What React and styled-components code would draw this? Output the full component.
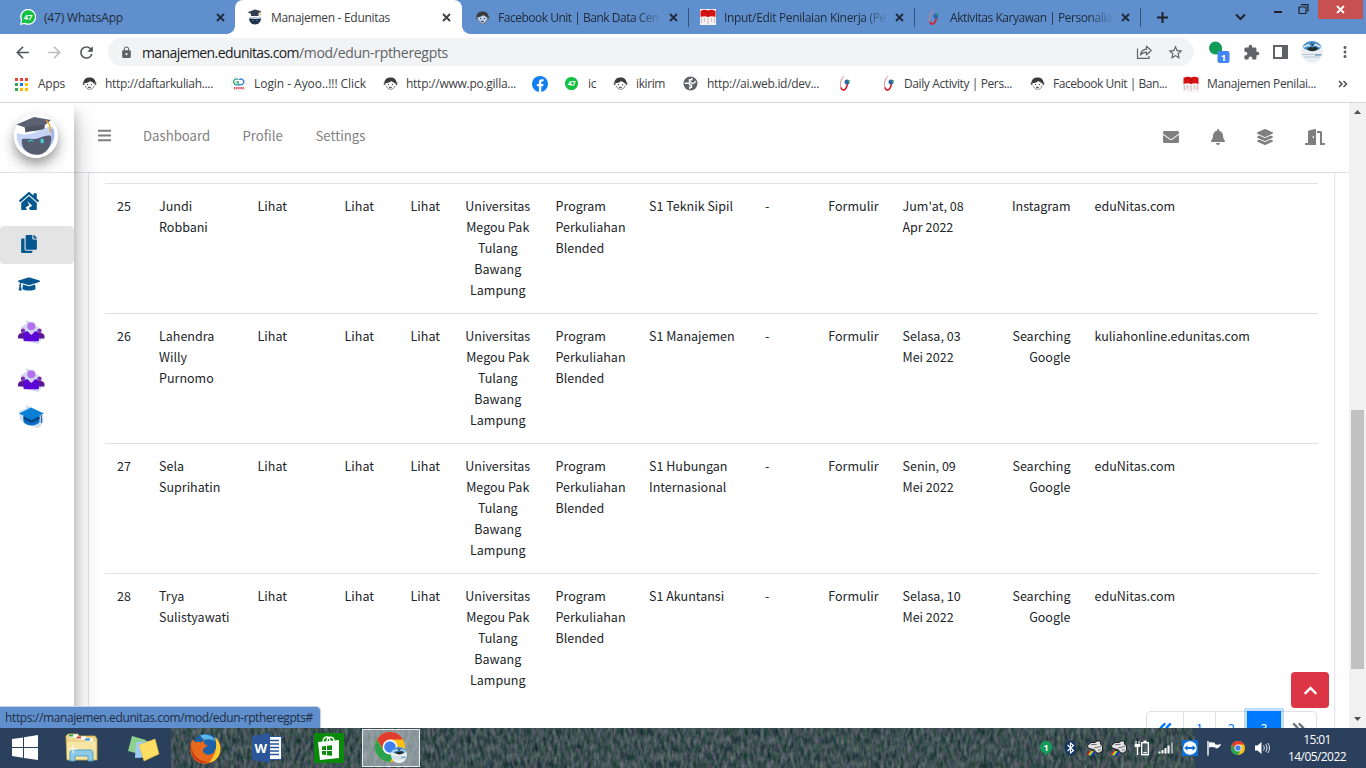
import React from "react";
import styled, { createGlobalStyle, css } from "styled-components";
import {
  FaEnvelope, FaBell, FaLayerGroup, FaDoorOpen, FaBars, FaHouseDamage, FaCopy,
  FaGraduationCap, FaAngleDoubleLeft, FaAngleDoubleRight, FaChevronUp,
} from "react-icons/fa";
import {
  MdArrowBack, MdArrowForward, MdRefresh, MdLock, MdStarBorder, MdExtension, MdMoreVert,
} from "react-icons/md";

const chromeBlue = "#608fcd";

const GlobalStyle = createGlobalStyle`
  * { box-sizing: border-box; }
  body { margin: 0; background: #fff; overflow: hidden; }
  svg { display: block; flex: none; }
`;

const Screen = styled.div`
  width: 1366px;
  height: 768px;
  display: flex;
  flex-direction: column;
  overflow: hidden;
  font-family: "Open Sans", "Noto Sans", sans-serif;
  font-size: 12px;
  color: #3c4043;
`;

/* ---------- browser chrome ---------- */

const TabStrip = styled.div`
  height: 34px;
  flex: none;
  display: flex;
  background: ${chromeBlue};
  color: #1f2a3a;
`;

const Tab = styled.div`
  width: ${(p) => p.$w}px;
  height: 34px;
  padding: 0 ${(p) => p.$right || 11}px 0 ${(p) => p.$pad}px;
  display: flex;
  align-items: center;
  position: relative;
  ${(p) => p.$divider && css`
    &::after {
      content: "";
      position: absolute;
      right: 0;
      top: 8px;
      width: 1px;
      height: 19px;
      background: #34527c;
    }
  `}
  ${(p) => p.$active && css`
    background: #fff;
    color: #3c4043;
    border-radius: 8px 8px 0 0;
    &::before, &::after {
      content: "";
      position: absolute;
      bottom: 0;
      width: 8px;
      height: 8px;
    }
    &::before { left: -8px; background: radial-gradient(circle at 0 0, ${chromeBlue} 7.5px, #fff 8px); }
    &::after { right: -8px; background: radial-gradient(circle at 100% 0, ${chromeBlue} 7.5px, #fff 8px); }
  `}
`;

const TabTitle = styled.span`
  flex: 1;
  min-width: 0;
  margin-left: ${(p) => p.$gap}px;
  white-space: nowrap;
  overflow: hidden;
  letter-spacing: ${(p) => p.$ls}px;
  ${(p) => p.$fade && css`
    margin-right: 8px;
    mask-image: linear-gradient(90deg, #000 85%, transparent 101%);
  `}
`;

const WindowControls = styled.div`
  flex: 1;
  display: flex;
  align-items: flex-start;
`;

const CloseWindow = styled.div`
  width: 45px;
  height: 19px;
  margin-left: 9px;
  background: #c75050;
  display: flex;
  align-items: center;
  justify-content: center;
`;

const Toolbar = styled.div`
  height: 35px;
  flex: none;
  display: flex;
  align-items: center;
  padding: 1px 12px 0 13px;
  color: #5f6368;
  background: #fff;
`;

const NavButton = styled.div`
  width: 32px;
  color: ${(p) => (p.$dim ? "#bbbdbf" : "#4f5357")};
`;

const UrlPill = styled.div`
  width: 1086px;
  height: 28px;
  margin-right: 14px;
  margin-left: -1px;
  padding: 0 10px 0 12px;
  border-radius: 14px;
  background: #f1f3f4;
  display: flex;
  align-items: center;
  gap: 14px;
`;

const UrlText = styled.div`
  flex: 1;
  margin-left: -5px;
  font-size: 14px;
  letter-spacing: -0.31px;
  white-space: nowrap;
  b { font-weight: 400; color: #202124; letter-spacing: -0.588px; }
`;

const Actions = styled.div`
  flex: 1;
  display: flex;
  align-items: center;
  justify-content: space-between;
`;

const BookmarksBar = styled.div`
  height: 34px;
  flex: none;
  display: flex;
  align-items: center;
  padding: 0 0 4px 14px;
  border-bottom: 1px solid #d4d7da;
  background: #fff;
  color: #3c4043;
`;

const Bookmark = styled.div`
  width: ${(p) => p.$w}px;
  flex: none;
  display: flex;
  align-items: center;
  white-space: nowrap;
  letter-spacing: ${(p) => p.$ls || 0}px;
`;

const BookmarkIcon = styled.div`
  width: ${(p) => p.$w}px;
  flex: none;
`;

/* ---------- page ---------- */

const Page = styled.div`
  height: 625px;
  flex: none;
  display: flex;
  position: relative;
  overflow: hidden;
  background: #fff;
  font-family: "Noto Sans CJK SC", sans-serif;
  font-size: 12.53px;
  line-height: 21px;
  color: #212529;
`;

const Sidebar = styled.aside`
  width: 74px;
  flex: none;
  background: #fff;
  z-index: 2;
  box-shadow: 0 14px 28px rgba(0, 0, 0, 0.25), 0 10px 10px rgba(0, 0, 0, 0.22);
  display: flex;
  flex-direction: column;
`;

const Brand = styled.div`
  height: 70px;
  border-bottom: 1px solid #dee2e6;
  padding: 11px 0 0 14px;
  overflow: hidden;
`;

const BrandLogo = styled.div`
  width: 44px;
  height: 44px;
  border-radius: 50%;
  background: #fff;
  box-shadow: 0 8px 16px rgba(0, 0, 0, 0.25), 0 5px 8px rgba(0, 0, 0, 0.2);
`;

const SideLinks = styled.nav`
  padding-top: 10px;
  color: #04588f;
`;

const SideLink = styled.div`
  height: ${(p) => p.$h || 38}px;
  margin-bottom: ${(p) => p.$mb || 0}px;
  padding: 0 0 ${(p) => p.$pb || 2}px ${(p) => p.$pl || 18}px;
  border-radius: 4px;
  display: flex;
  align-items: center;
  background: ${(p) => (p.$active ? "#e4e4e4" : "transparent")};
`;

const Main = styled.main`
  width: 1275px;
  flex: none;
  display: flex;
  flex-direction: column;
`;

const Header = styled.header`
  height: 70px;
  flex: none;
  display: flex;
  align-items: center;
  padding: 0 24px 6px 22.5px;
  border-bottom: 1px solid #dee2e6;
  color: #7f7f7f;
`;

const HeaderLink = styled.span`
  width: ${(p) => p.$w}px;
  font-size: 13.2px;
  padding-top: 1px;
`;

const HeaderIcons = styled.div`
  margin-left: auto;
  display: flex;
  align-items: center;
  padding-top: 5px;
`;

const HeaderIcon = styled.div`
  margin-left: ${(p) => p.$ml}px;
`;

const Card = styled.section`
  flex: 1;
  margin: 0 14px;
  padding: 10px 16px 0;
  border: solid #e3e5e8;
  border-width: 0 1px;
  box-shadow: 0 0 1px rgba(0, 0, 0, 0.12);
`;

const Row = styled.div`
  height: 130px;
  border-top: 1px solid #dee2e6;
  padding-top: 11px;
  display: grid;
  grid-template-columns: 42px 94px 58px 87px 66px 91.5px 93.5px 116px 60px 77.5px 104px 88px 1fr;
`;

const Cell = styled.div`
  padding: 0 12px;
  white-space: pre;
  text-align: ${(p) => p.$align || "left"};
`;

const Pagination = styled.div`
  display: flex;
  justify-content: flex-end;
  margin-top: 8px;
  margin-right: 1px;
`;

const PageItem = styled.div`
  width: ${(p) => p.$w}px;
  height: 35px;
  padding-bottom: 2px;
  margin-left: -1px;
  border: 1px solid #dee2e6;
  color: ${(p) => (p.$muted ? "#6c757d" : "#007bff")};
  display: flex;
  align-items: center;
  justify-content: center;
  &:first-child { border-radius: 4px 0 0 4px; }
  &:last-child { border-radius: 0 4px 4px 0; }
  ${(p) => p.$active && css`
    background: #007bff;
    border-color: #007bff;
    color: #fff;
    z-index: 1;
    box-shadow: 0 0 0 3px rgba(0, 123, 255, 0.25);
  `}
`;

const ScrollTop = styled.div`
  position: absolute;
  right: 37px;
  top: 569px;
  width: 38px;
  height: 36px;
  border-radius: 4px;
  background: #dc3545;
  color: #fff;
  display: flex;
  align-items: center;
  justify-content: center;
`;

const LinkStatus = styled.div`
  position: absolute;
  left: 0;
  bottom: 0;
  width: 321px;
  height: 22px;
  z-index: 3;
  padding-left: 5px;
  background: ${chromeBlue};
  border: solid #c9d2de;
  border-width: 1px 1px 0 0;
  border-radius: 0 5px 0 0;
  font: 12px/21px "Open Sans", sans-serif;
  letter-spacing: -0.377px;
  white-space: nowrap;
  color: #1f2d42;
`;

const Scrollbar = styled.div`
  width: 17px;
  flex: none;
  background: #f1f1f1;
  display: flex;
  flex-direction: column;
  align-items: center;
  padding: 7px 0 0;
`;

const Thumb = styled.div`
  width: 13px;
  height: 259px;
  margin: 296px 0 48px;
  background: #c1c1c1;
`;

/* ---------- taskbar ---------- */

const Taskbar = styled.footer`
  height: 40px;
  flex: none;
  position: relative;
  display: flex;
  align-items: center;
  background: #2b405d;
  color: #fff;
`;

const Grass = styled.svg`
  position: absolute;
  left: 171px;
  top: 0;
`;

const TaskButton = styled.div`
  width: ${(p) => p.$w}px;
  height: 40px;
  display: flex;
  align-items: center;
  justify-content: center;
  position: relative;
`;

const ActiveTask = styled(TaskButton)`
  height: 38px;
  margin-left: 2px;
  background: rgba(190, 200, 205, 0.6);
  border: 1px solid #e6eaec;
`;

const Tray = styled.div`
  margin-left: auto;
  display: flex;
  position: relative;
`;

const TrayItem = styled.div`
  width: 24px;
  display: flex;
  align-items: center;
  justify-content: center;
`;

const Clock = styled.div`
  width: 92px;
  height: 40px;
  padding: 4px 6px 0 0;
  line-height: 16.5px;
  text-align: center;
  letter-spacing: -0.57px;
`;

/* ---------- icons ---------- */

const Cross = ({ size = 9, color = "#1f2a3a", sw = 1.9 }) => (
  <svg width={size} height={size} viewBox="0 0 9 9">
    <path d="M1 1l7 7M8 1l-7 7" stroke={color} strokeWidth={sw} fill="none" />
  </svg>
);

const WhatsApp = ({ size = 16, ring }) => (
  <svg width={size} height={size} viewBox="0 0 16 16">
    {ring && <path d="M0 16l1-4.5A8 8 0 1 1 4.5 15z" fill="#fff" />}
    <path d={ring ? "M1.4 14.6l.9-3.5A6.7 6.7 0 1 1 5 13.8z" : "M8 1a7 7 0 1 1-.01 0z"} fill="#12c044" />
    <text x="8" y="10.8" fontSize="7.6" fontWeight="700" fontFamily="Open Sans" fill="#fff" textAnchor="middle">47</text>
  </svg>
);

const Agent = ({ size = 15 }) => (
  <svg width={size} height={size} viewBox="0 0 15 15">
    <path d="M3 7.500C3.200 11 5 13.400 7.500 13.400S11.800 11 12 7.500L9 5 4 6z" fill="#fff" fillOpacity=".6" />
    <path d="M1.500 6.800C1.600 3.400 4 1.500 7.500 1.500s5.900 1.900 6 5.300l-1.400 1C11.500 6.600 9.500 6 8.200 5 6.700 6.600 4.700 7 3.200 7z" fill="#3b3b3d" />
    <path d="M1 6.300h1.500v2.900L.6 8.500zM12.500 6.300h1.800v2.200l-1.500 1z" fill="#555" />
    <path d="M3.300 10c.8 1.900 2.200 3.300 4.200 3.300 2.800 0 4-1.500 4.600-3.500" stroke="#777" strokeWidth=".9" fill="none" />
    <circle cx="5.500" cy="8.600" r=".7" fill="#333" /><circle cx="9.500" cy="8.600" r=".7" fill="#333" />
    <path d="M6 11.300h2.800" stroke="#333" strokeWidth="1" />
  </svg>
);

const Bot = ({ size = 44 }) => (
  <svg width={size} height={size} viewBox="0 0 44 44">
    <circle cx="22" cy="22" r="22" fill="#fff" />
    <path d="M3 19c5 2 12 2 19-1s13-6 17-5c3 8 1 17-6 23-6 5-16 5-23 0C4 31 2 25 3 19z" fill="#c6d4f7" />
    <path d="M36 15c2.500 7 1.500 14-4 20 7-4 10-12 7.500-20z" fill="#a3b8ec" />
    <path d="M8 25c6-1 12 1 17-1s9-3 12-2c1 8-3 17-11 18.500C16 42 6 36 8 25z" fill="#575d71" />
    <path d="M14.500 28c1-2.500 3.500-2.500 4.500-.500" stroke="#37c6d0" strokeWidth="1.300" fill="none" />
    <rect x="26.500" y="24.500" width="3.200" height="4.800" rx="1.500" fill="#41d3dc" />
    <path d="M10.500 12l1 6.500c5-2 13-1 19-4L31 8z" fill="#4d5363" />
    <path d="M2.500 10.500L20 3l17 3-6 5c-8-.5-13 1.500-20 2.500z" fill="#5c6274" />
    <path d="M32 6.500c3 2 5 5 4 12" stroke="#f5a623" strokeWidth="1.400" fill="none" />
  </svg>
);

const BotFavicon = () => (
  <svg width="16" height="16" viewBox="0 0 16 16">
    <path d="M2 8h12c.5 4-2 7.500-6 7.500S1.500 12 2 8z" fill="#1f2f45" />
    <path d="M2 7.500c3 1 8 .8 12 0v2c-4 .6-8 .6-12 0z" fill="#cfdcf3" />
    <path d="M.5 3.200L8 .5l6.500 1.800-3 2V7H4V4.800z" fill="#333c50" />
    <circle cx="6" cy="11.500" r=".6" fill="#49c3e0" /><circle cx="10" cy="11.300" r=".6" fill="#49c3e0" />
    <path d="M13.200 2.600v4" stroke="#d79c3a" strokeWidth=".9" />
  </svg>
);

const FlagBook = () => (
  <svg width="16" height="16" viewBox="0 0 16 16">
    <rect width="16" height="16" fill="#f7f3f3" />
    <path d="M.5 2C3 .3 6 .3 8 1.500c2-1.200 5-1.200 7.500.5v6c-2.500-1-5.500-1-7.500 0C6 7 3 7 .5 8z" fill="#d81212" />
    <path d="M8 2v6M3 3c1.500-.6 3-.5 4 0" stroke="#a50d0d" strokeWidth=".7" fill="none" />
    <path d="M1.500 9v5M4.500 9v4M8 9v6M11.500 9v4M14.500 9v5" stroke="#d6c4c4" strokeWidth="1.300" fill="none" />
  </svg>
);

const Swoosh = () => (
  <svg width="14" height="17" viewBox="0 0 14 17">
    <path d="M5 1.200C1.800 4 .6 9 2 13c.2.700.6 1.200 1 1.500" stroke="#d8848a" strokeWidth="1" fill="none" />
    <path d="M2 12.500c.8 3.300 3.600 3.300 5 .7.800-1.400 1.200-2.700 1.400-4" stroke="#d6202b" strokeWidth="1.700" fill="none" />
    <circle cx="8" cy="7" r="2.500" fill="#2d64a8" /><path d="M8.500 4.800l2.500.8-1.700 2.400z" fill="#3a9d6a" />
  </svg>
);

const AppsGrid = () => (
  <svg width="14" height="14" viewBox="0 0 14 14">
    {["#ea4335", "#ea4335", "#ea4335", "#34a853", "#1a73e8", "#fbbc04", "#34a853", "#fbbc04", "#fbbc04"].map((c, i) => (
      <rect key={i} x={1 + (i % 3) * 5} y={1 + Math.floor(i / 3) * 5} width="3" height="3" fill={c} />
    ))}
  </svg>
);

const ClickLogo = () => (
  <svg width="16" height="16" viewBox="0 0 16 16">
    <circle cx="8" cy="8" r="7.500" fill="#fff" stroke="#e3e3e3" strokeWidth=".6" />
    <path d="M7.200 3.600a2.800 2.800 0 1 0 0 4.400V6H5.300" stroke="#2fae74" strokeWidth="1.300" fill="none" />
    <path d="M8 3.900a2.800 2.800 0 1 1 .8 4.500L7 9.800" stroke="#3f86d8" strokeWidth="1.300" fill="none" />
    <path d="M3 12.200h10" stroke="#e0506a" strokeWidth="2.200" strokeDasharray="1.500 .6" />
  </svg>
);

const Facebook = () => (
  <svg width="16" height="16" viewBox="0 0 16 16">
    <circle cx="8" cy="8" r="8" fill="#1280f0" />
    <path d="M6.900 16v-5.700H4.900V8h2V6.300c0-2 1.200-3.100 3-3.100.9 0 1.700.1 1.700.1v2h-1c-1 0-1.300.6-1.300 1.200V8h2.200l-.4 2.300H9.300V16z" fill="#fff" />
  </svg>
);

const Globe = () => (
  <svg width="15" height="15" viewBox="0 0 15 15">
    <circle cx="7.500" cy="7.500" r="7" fill="#5f6368" />
    <path d="M1.800 7.300h3.400c1.200 0 1.800.7 1.800 1.800h1.500v2.200H6.800v1.900M12.800 5.200c-1 1.500-1.800 2.300-3.300 2.300-1.500 0-1.400-1.800-3-1.800V3.800h2.300V2" stroke="#fff" strokeWidth="1.400" fill="none" />
  </svg>
);

const Share = () => (
  <svg width="17" height="16" viewBox="0 0 17 16">
    <path d="M1.500 4.500v9.800h11.500V12" stroke="#5f6368" strokeWidth="1.200" fill="none" />
    <path d="M4.500 11c.5-4 2.500-5.500 6-5.800V2.200l4.700 4.300-4.700 4.300V8.200c-2.500 0-4.500.8-6 2.800z" stroke="#5f6368" strokeWidth="1.200" fill="none" strokeLinejoin="round" />
  </svg>
);

const NoteExtension = () => (
  <svg width="22" height="24" viewBox="0 0 22 24">
    <path d="M7.500 1.500a6.500 6.500 0 0 1 6.500 6.500v7l-4-1A6.500 6.500 0 1 1 7.500 1.500z" fill="#129c57" />
    <rect x="9.500" y="11" width="12" height="12" rx="2" fill="#4285f4" />
    <text x="15.500" y="20.600" fontSize="9.500" fontWeight="700" fontFamily="Open Sans" fill="#fff" textAnchor="middle">1</text>
  </svg>
);

const Avatar = ({ size = 22 }) => (
  <svg width={size} height={size} viewBox="0 0 22 22">
    <circle cx="11" cy="11" r="11" fill="#e9eff2" />
    <path d="M1.500 5.500A11 11 0 0 1 20.500 5.500L18 8.500H4z" fill="#4a8fcb" />
    <path d="M2.500 6l5-2 1.500 1.500M19.500 6l-5-2.500L13 5" stroke="#dcecf8" strokeWidth="1.500" fill="none" />
    <path d="M10.500 1.500l1 3.500 1.500-3" stroke="#1f4f78" fill="none" />
    <path d="M5.500 8l4-2.200 2 .8 3-1 3 2.400c-2 1.800-4 2.200-6 2.200S7 9.800 5.500 8z" fill="#20312c" />
    <path d="M1 13.500h20M3 16h16" stroke="#b4c9d5" strokeWidth="1.100" />
    <path d="M14 14h6" stroke="#3f7fb0" />
  </svg>
);

const Crowd = () => (
  <svg width="28" height="25" viewBox="0 0 28 25">
    <path d="M3 8l5-3 1-4 5 3 6 4 4 6v6l-4 5-8-2-9-3z" fill="#d3d8f2" />
    <circle cx="5" cy="11.800" r="2.200" fill="#7a2cb0" /><circle cx="21.500" cy="11.800" r="2.200" fill="#7a2cb0" />
    <path d="M0 19.500V17.500c0-2.500 2-3.500 5-3.500s4 1 4 3.500v2zM18 19.500v-2c0-2.500 1-3.500 4-3.500s4.500 1 4.500 3.500v2z" fill="#5b1796" />
    <circle cx="13.300" cy="7.300" r="4" fill="#b471ee" />
    <path d="M5.500 20.500c0 1 .5 1.700 1.500 1.700h12.500c1 0 1.500-.7 1.500-1.700V16c0-2.500-1.500-3.700-4-3.700l-3.700 3.700-3.700-3.700c-2.500 0-4.100 1.200-4.100 3.700z" fill="#5b06d6" />
    <path d="M11 12.300h4.800l-1 3-.9-1.500h-1l-.9 1.500z" fill="#dcc8fa" />
  </svg>
);

const BlueCap = () => (
  <svg width="28" height="25" viewBox="0 0 28 25">
    <path d="M1 7l6-2 2-4 5 3 7 5 5 7-4 7-3 1-8-3-9-5z" fill="#cfe0f5" />
    <path d="M5.500 12v6c3 4.500 13 4.500 16 0v-6z" fill="#0a6fc4" />
    <path d="M5.500 12.500v2.500l8 4 8-4v-2.500l-8 4z" fill="#07427f" />
    <path d="M1 9.500L13 3.500 26 9.500 13.500 15.500z" fill="#0a7fd6" />
    <path d="M23.500 11v8" stroke="#2568a8" strokeWidth="1.300" />
  </svg>
);

const ChromeLogo = ({ size }) => (
  <svg width={size} height={size} viewBox="0 0 30 30">
    <circle cx="15" cy="15" r="15" fill="#fbc116" />
    <path d="M2 7.500A15 15 0 0 1 28 7.500H15L9 18.500z" fill="#e33b2e" />
    <path d="M2 7.500A15 15 0 0 0 15 30l6.500-11.200L15 22 8.600 18.800z" fill="#2ba24c" />
    <circle cx="15" cy="15" r="7.400" fill="#fff" />
    <circle cx="15" cy="15" r="5.800" fill="#3f80ee" />
  </svg>
);

const WindowsLogo = () => (
  <svg width="26" height="26" viewBox="0 0 26 26">
    <path d="M0 4l11-1.600V12H0zM12 2.200L26 0v12H12zM0 13h11v9.700L0 21.100zM12 13h14v12l-14-2z" fill="#fff" />
  </svg>
);

const Explorer = () => (
  <svg width="33" height="30" viewBox="0 0 33 30">
    <path d="M1 3l2-2h10l1 2h16l2 3v21H2z" fill="#ecd588" stroke="#d0b052" strokeWidth=".8" />
    <path d="M4 3h9M12 5h9M20 7h8" stroke="#fff" strokeWidth="3" />
    <path d="M4 2.500h4" stroke="#22a04a" strokeWidth="2" /><path d="M12 4.500h4" stroke="#d33d2e" strokeWidth="2" /><path d="M20 6.500h5" stroke="#2f8fdc" strokeWidth="2" />
    <path d="M2 9h29v17H2z" fill="#f5e6a6" />
    <path d="M5 28v-8c0-2 1-3 3-3h17c2 0 3 1 3 3v8h-5v-5H10v5z" fill="#8fcbe6" stroke="#4a9dc4" strokeWidth=".9" />
    <path d="M8 12v8M4 16h8" stroke="#fff" strokeWidth="1" />
  </svg>
);

const StickyNotes = () => (
  <svg width="33" height="27" viewBox="0 0 33 27">
    <path d="M5 1l14 4-3 15-15-4z" fill="#8dd08a" />
    <path d="M9 7l13-1 3 16-17 1z" fill="#9cccf5" />
    <path d="M12 10l16-6 4 15-15 7z" fill="#ffdf63" stroke="#e6bd3b" strokeWidth=".6" />
  </svg>
);

const Firefox = () => (
  <svg width="31" height="31" viewBox="0 0 31 31">
    <circle cx="16" cy="15" r="14" fill="#1d62a8" />
    <path d="M10 2.500c6-2.500 13 0 16 6-4-2.500-8-3-12-1.500z" fill="#59b7e8" />
    <path d="M25 4c6 5 7 14 3 20-5 7-15 9-22 4C-1 22-1 12 3 6l2 3.500c2-1 4-1 6 0l3-2.500c-.5 2 0 3.500 1 4.500l3 .7-3 2.300c-2 1-3 3.500-1 5.500 3 3 8 2 10-1 3-4 3.500-9 1-15z" fill="#e8691b" />
    <path d="M25 4c6 5 7 14 3 20-2 3-5 5-9 5.500 6-6 9-15 6-25.500z" fill="#ffcb33" />
    <path d="M1.500 12c0 9 6 16 17 17.500C8 32-.5 24 1.500 12z" fill="#c73819" />
  </svg>
);

const Word = () => (
  <svg width="30" height="30" viewBox="0 0 30 30">
    <rect x="15" y="3.500" width="14.500" height="23" fill="#fff" stroke="#2b579a" />
    <path d="M18 7.500h9M18 11h9M18 14.500h9M18 18h9M18 21.500h9" stroke="#2b579a" strokeWidth="1.400" />
    <path d="M0 3l18-3v30L0 27z" fill="#2b579a" />
    <text x="8.800" y="19.500" fontSize="13" fontWeight="700" fontFamily="Open Sans" fill="#fff" textAnchor="middle">W</text>
  </svg>
);

const Store = () => (
  <svg width="30" height="30" viewBox="0 0 30 30">
    <rect width="30" height="30" fill="#0a8a0a" />
    <path d="M4 9l21-2v18L6 27z" fill="#fff" />
    <path d="M9 9c0-6 7-7 7-1M13 8c0-5 7-5 7 0" stroke="#fff" strokeWidth="1.300" fill="none" />
    <path d="M8 13.500l4-.5v4H8zM13 12.800l5-.6V17h-5zM8 18h4v4l-4-.5zM13 18h5v4.800l-5-.6z" fill="#0a8a0a" />
  </svg>
);

const NoteTray = () => (
  <svg width="14" height="16" viewBox="0 0 14 16">
    <path d="M7 1a6.300 6.300 0 0 1 2.500 12L7 15.500 5 13A6.300 6.300 0 0 1 7 1z" fill="#129c57" />
    <text x="7" y="10.600" fontSize="9" fontWeight="700" fontFamily="Open Sans" fill="#fff" textAnchor="middle">1</text>
  </svg>
);

const Bluetooth = () => (
  <svg width="13" height="16" viewBox="0 0 13 16">
    <ellipse cx="6.500" cy="8" rx="5.800" ry="7.700" fill="#14335f" />
    <path d="M3.500 5l6 5.500L6.500 13V3l3 2.500-6 5.500" stroke="#fff" strokeWidth="1.200" fill="none" />
  </svg>
);

const Printer = () => (
  <svg width="17" height="17" viewBox="0 0 17 17">
    <path d="M1.500 5.500L5 2.500h4L11 1h3.500v3L16.500 6v5l-3 2H11L8.500 10 2 8z" fill="#e2e2e2" stroke="#111" strokeWidth=".9" />
    <path d="M5 4.500h5.500M8 8l5-1 3-1.500M12 10h3" stroke="#777" strokeWidth="1" fill="none" />
    <path d="M.5 14.500L4 10.500l1.500.3L2.300 15z" fill="#e62222" />
    <path d="M2.300 15l3.200-4.200 1.500.5L3.800 15.500z" fill="#f7ed1c" />
    <path d="M3.800 15.500L7 11.300l1.200.5-3 4z" fill="#22c060" />
    <path d="M5.200 15.800l3-4 1.800.4-3.300 3.800z" fill="#2020d0" />
  </svg>
);

const Battery = () => (
  <svg width="16" height="16" viewBox="0 0 16 16">
    <rect x="7.700" y="2.700" width="6.600" height="12" fill="none" stroke="#fff" strokeWidth="1.400" />
    <path d="M9.500 1.300h3" stroke="#fff" strokeWidth="1.400" /><path d="M9.300 12.700h3.400" stroke="#fff" strokeWidth="1.200" />
    <path d="M2 1v3.500M5 1v3.500" stroke="#fff" strokeWidth="1" /><path d="M.8 4h5.400v3H.8z" fill="#fff" /><path d="M3.500 7v8" stroke="#fff" strokeWidth="1.400" />
  </svg>
);

const Signal = () => (
  <svg width="16" height="14" viewBox="0 0 16 14">
    <path d="M1.500 10.500v2M4.500 9v3.500M7.500 7v5.500M10.500 4.500v8" stroke="#fff" strokeWidth="2" />
    <path d="M14 1.500v11" stroke="#9aa5a5" strokeWidth="2" />
  </svg>
);

const TeamViewer = () => (
  <svg width="16" height="16" viewBox="0 0 16 16">
    <rect width="16" height="16" fill="#0e6fd6" />
    <circle cx="8" cy="8" r="6.800" fill="#fff" />
    <path d="M2.200 8L5.500 5.300v1.600h5V5.300L13.800 8l-3.300 2.700V9.100h-5v1.600z" fill="#0e6fd6" />
  </svg>
);

const ActionFlag = () => (
  <svg width="16" height="16" viewBox="0 0 16 16">
    <path d="M2 1v14.500" stroke="#fff" strokeWidth="1.400" />
    <path d="M3 2.500c2-.8 4 0 6 .3v1.500c2 .8 4 .5 6-.5-.5 3-3 5-5.500 4.500V7.500C7 7 5 6.500 3 7.500z" fill="#fff" />
  </svg>
);

const Speaker = () => (
  <svg width="16" height="14" viewBox="0 0 16 14">
    <path d="M1 4.500h2.500L7.500 1v12L3.500 9.500H1z" fill="#fff" />
    <path d="M9.500 4.500c1 1.500 1 3.500 0 5M11.700 3.200c1.700 2.300 1.700 5.300 0 7.600M13.700 2c2.300 3 2.300 7 0 10" stroke="#e8edf2" strokeWidth="1" fill="none" />
  </svg>
);

/* ---------- data ---------- */

const bookmarks = [
  { w: 68, iw: 24, icon: <AppsGrid />, text: "Apps", ls: -0.25 },
  { w: 149, iw: 23, icon: <Agent />, text: "http://daftarkuliah....", ls: -0.325 },
  { w: 152, iw: 23, icon: <ClickLogo />, text: "Login - Ayoo..!!! Click", ls: -0.049 },
  { w: 149, iw: 23, icon: <Agent />, text: "http://www.po.gilla...", ls: -0.259 },
  { w: 32, iw: 24, icon: <Facebook />, text: "" },
  { w: 49, iw: 24, icon: <WhatsApp size={15} />, text: "ic", ls: -0.3 },
  { w: 70, iw: 23, icon: <Agent />, text: "ikirim", ls: -0.4 },
  { w: 156, iw: 24, icon: <Globe />, text: "http://ai.web.id/dev...", ls: -0.3 },
  { w: 44, iw: 20, icon: <Swoosh />, text: "" },
  { w: 147, iw: 21, icon: <Swoosh />, text: "Daily Activity | Pers...", ls: -0.391 },
  { w: 153, iw: 23, icon: <Agent />, text: "Facebook Unit | Ban...", ls: -0.456 },
  { w: 155, iw: 24, icon: <FlagBook />, text: "Manajemen Penilai...", ls: -0.355 },
];

const univ = "Universitas\nMegou Pak\nTulang\nBawang\nLampung";
const program = "Program\nPerkuliahan\nBlended";

const rows = [
  { no: 25, name: "Jundi\nRobbani", major: "S1 Teknik Sipil", date: "Jum'at, 08\nApr 2022", source: "Instagram", site: "eduNitas.com" },
  { no: 26, name: "Lahendra\nWilly\nPurnomo", major: "S1 Manajemen", date: "Selasa, 03\nMei 2022", source: "Searching\nGoogle", site: "kuliahonline.edunitas.com" },
  { no: 27, name: "Sela\nSuprihatin", major: "S1 Hubungan\nInternasional", date: "Senin, 09\nMei 2022", source: "Searching\nGoogle", site: "eduNitas.com" },
  { no: 28, name: "Trya\nSulistyawati", major: "S1 Akuntansi", date: "Selasa, 10\nMei 2022", source: "Searching\nGoogle", site: "eduNitas.com" },
];

const Plus = styled.svg`margin: 11px 0 0 15px;`;
const TabMenu = styled.svg`margin: 13px 0 0 66px;`;
const Minimize = styled.svg`margin: 11px 0 0 28px;`;
const Restore = styled.svg`margin: 4px 0 0 16px;`;

export default function App() {
  return (
    <Screen>
      <GlobalStyle />
      <TabStrip>
        <Tab $w={235} $pad={20} $right={10}>
          <WhatsApp ring /><TabTitle $gap={8} $ls={-0.177}>(47) WhatsApp</TabTitle><Cross />
        </Tab>
        <Tab $w={227} $pad={12} $active>
          <BotFavicon /><TabTitle $gap={8} $ls={-0.299}>Manajemen - Edunitas</TabTitle><Cross color="#3c4043" />
        </Tab>
        <Tab $w={227} $pad={13} $divider>
          <Agent /><TabTitle $gap={8} $ls={-0.486} $fade>Facebook Unit | Bank Data Cen</TabTitle><Cross />
        </Tab>
        <Tab $w={226} $pad={11} $divider>
          <FlagBook /><TabTitle $gap={8} $ls={-0.326} $fade>Input/Edit Penilaian Kinerja (Pe</TabTitle><Cross />
        </Tab>
        <Tab $w={226} $pad={13} $divider>
          <Swoosh /><TabTitle $gap={8} $ls={-0.462} $fade>Aktivitas Karyawan | Personalia</TabTitle><Cross />
        </Tab>
        <WindowControls>
          <Plus width="13" height="13" viewBox="0 0 13 13"><path d="M6.500 1v11M1 6.500h11" stroke="#1f2328" strokeWidth="2" /></Plus>
          <TabMenu width="11" height="8" viewBox="0 0 11 8"><path d="M1 1.500l4.500 4.500L10 1.500" stroke="#1f2328" strokeWidth="2" fill="none" /></TabMenu>
          <Minimize width="8" height="3"><rect width="8" height="2" fill="#1f2328" /></Minimize>
          <Restore width="11" height="11" viewBox="0 0 11 11"><path d="M1 3h7v6.500H1zM3 .7h7v7" stroke="#1f2328" strokeWidth="1.200" fill="none" /></Restore>
          <CloseWindow><Cross size={9} color="#fff" sw={1.8} /></CloseWindow>
        </WindowControls>
      </TabStrip>

      <Toolbar>
        <NavButton><MdArrowBack size={19} /></NavButton>
        <NavButton $dim><MdArrowForward size={19} /></NavButton>
        <NavButton><MdRefresh size={19} /></NavButton>
        <UrlPill>
          <MdLock size={13} />
          <UrlText><b>manajemen.edunitas.com</b>/mod/edun-rptheregpts</UrlText>
          <Share />
          <MdStarBorder size={17} />
        </UrlPill>
        <Actions>
          <NoteExtension />
          <MdExtension size={17} />
          <svg width="15" height="14" viewBox="0 0 15 14"><path d="M1 1h13v12H1z" stroke="#5f6368" strokeWidth="2" fill="none" /><path d="M9 1h5v12H9z" fill="#5f6368" /></svg>
          <Avatar />
          <MdMoreVert size={18} />
        </Actions>
      </Toolbar>

      <BookmarksBar>
        {bookmarks.map((b, i) => (
          <Bookmark key={i} $w={b.w} $ls={b.ls}>
            <BookmarkIcon $w={b.iw}>{b.icon}</BookmarkIcon>
            {b.text}
          </Bookmark>
        ))}
        <svg width="10" height="8" viewBox="0 0 10 8"><path d="M1 1l3 3-3 3M5.500 1l3 3-3 3" stroke="#4a4d51" strokeWidth="1.500" fill="none" /></svg>
      </BookmarksBar>

      <Page>
        <Sidebar>
          <Brand><BrandLogo><Bot /></BrandLogo></Brand>
          <SideLinks>
            <SideLink $mb={5} $pl={19}><FaHouseDamage size={20} /></SideLink>
            <SideLink $active $mb={2} $pl={20} $pb={3}><FaCopy size={18} /></SideLink>
            <SideLink $mb={9}><FaGraduationCap size={22} /></SideLink>
            <SideLink $mb={9}><Crowd /></SideLink>
            <SideLink $mb={1} $h={40}><Crowd /></SideLink>
            <SideLink $h={36} $pb={5}><BlueCap /></SideLink>
          </SideLinks>
        </Sidebar>

        <Main>
          <Header>
            <HeaderLink $w={46.5}><FaBars size={15} /></HeaderLink>
            <HeaderLink $w={99.5}>Dashboard</HeaderLink>
            <HeaderLink $w={73}>Profile</HeaderLink>
            <HeaderLink $w={60}>Settings</HeaderLink>
            <HeaderIcons>
              <HeaderIcon><FaEnvelope size={16} /></HeaderIcon>
              <HeaderIcon $ml={31}><FaBell size={16} /></HeaderIcon>
              <HeaderIcon $ml={31}><FaLayerGroup size={16} /></HeaderIcon>
              <HeaderIcon $ml={32}><FaDoorOpen size={20} /></HeaderIcon>
            </HeaderIcons>
          </Header>
          <Card>
            {rows.map((r) => (
              <Row key={r.no}>
                <Cell>{r.no}</Cell>
                <Cell>{r.name}</Cell>
                <Cell $align="right">Lihat</Cell>
                <Cell $align="right">Lihat</Cell>
                <Cell $align="right">Lihat</Cell>
                <Cell $align="center">{univ}</Cell>
                <Cell>{program}</Cell>
                <Cell>{r.major}</Cell>
                <Cell>-</Cell>
                <Cell $align="right">Formulir</Cell>
                <Cell>{r.date}</Cell>
                <Cell $align="right">{r.source}</Cell>
                <Cell>{r.site}</Cell>
              </Row>
            ))}
            <Pagination>
              <PageItem $w={38}><FaAngleDoubleLeft size={15} /></PageItem>
              <PageItem $w={33}>1</PageItem>
              <PageItem $w={33}>2</PageItem>
              <PageItem $w={34} $active>3</PageItem>
              <PageItem $w={37} $muted><FaAngleDoubleRight size={15} /></PageItem>
            </Pagination>
          </Card>
        </Main>

        <Scrollbar>
          <svg width="7" height="4"><path d="M0 4L3.500 0 7 4z" fill="#505050" /></svg>
          <Thumb />
          <svg width="7" height="4"><path d="M0 0h7L3.500 4z" fill="#505050" /></svg>
        </Scrollbar>
        <ScrollTop><FaChevronUp size={15} /></ScrollTop>
        <LinkStatus>https://manajemen.edunitas.com/mod/edun-rptheregpts#</LinkStatus>
      </Page>

      <Taskbar>
        <Grass width="1024" height="40">
          <filter id="grass" x="0" y="0" width="100%" height="100%" colorInterpolationFilters="sRGB">
            <feTurbulence type="fractalNoise" baseFrequency="0.3 0.12" numOctaves="4" seed="7" />
            <feColorMatrix values="0.5 0 0 0 -0.01  0.35 0.15 0 0 0.06  0.4 0 0.1 0 0.07  0 0 0 0 1" />
          </filter>
          <rect width="1024" height="40" filter="url(#grass)" />
        </Grass>
        <TaskButton $w={50}><WindowsLogo /></TaskButton>
        <TaskButton $w={62}><Explorer /></TaskButton>
        <TaskButton $w={62}><StickyNotes /></TaskButton>
        <TaskButton $w={62}><Firefox /></TaskButton>
        <TaskButton $w={62}><Word /></TaskButton>
        <TaskButton $w={62}><Store /></TaskButton>
        <ActiveTask $w={58}>
          <svg width="32" height="32" viewBox="0 0 32 32">
            <ChromeLogo size={30} />
            <g transform="translate(16 15) scale(.73)"><Avatar /></g>
          </svg>
        </ActiveTask>
        <Tray>
          {[NoteTray, Bluetooth, Printer, Printer, Battery, Signal, TeamViewer, ActionFlag].map((Icon, i) => (
            <TrayItem key={i}><Icon /></TrayItem>
          ))}
          <TrayItem><ChromeLogo size={14} /></TrayItem>
          <TrayItem><Speaker /></TrayItem>
          <Clock>15:01<br />14/05/2022</Clock>
        </Tray>
      </Taskbar>
    </Screen>
  );
}
